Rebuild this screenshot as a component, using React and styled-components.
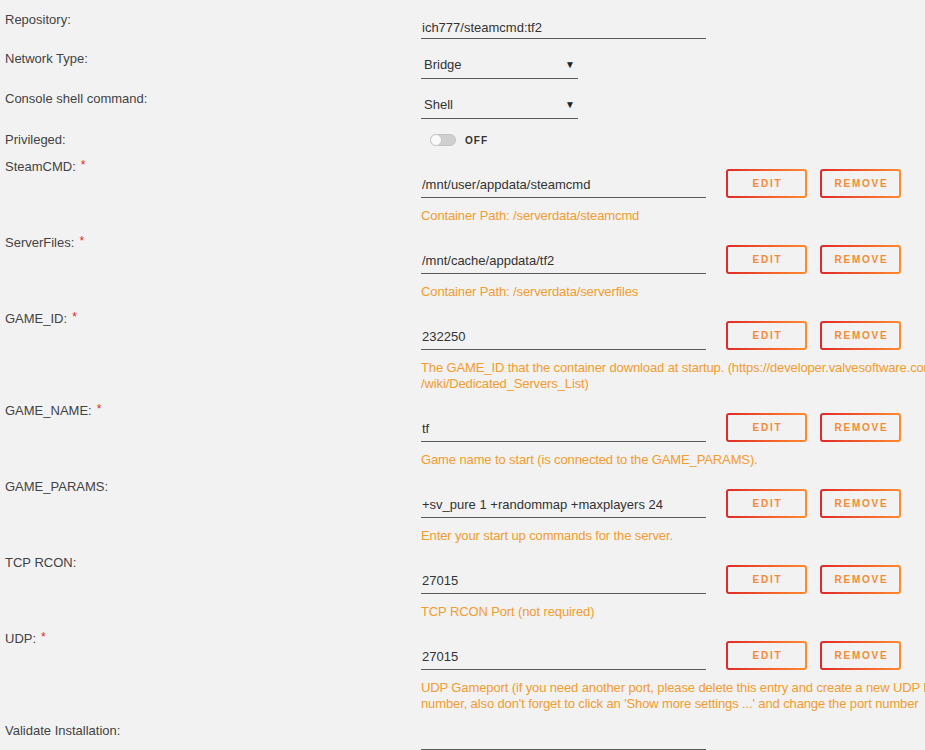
import styled, { createGlobalStyle } from 'styled-components';

const GlobalStyle = createGlobalStyle`
	html, body {
		margin: 0;
		padding: 0;
		overflow: hidden;
		background: #f2f2f2;
	}
	* {
		box-sizing: border-box;
	}
`;

const font = `'Liberation Sans', Arial, sans-serif`;
const orange = '#f29c2e';

const settings = [
	{ label: 'Repository:', kind: 'text', value: 'ich777/steamcmd:tf2' },
	{ label: 'Network Type:', kind: 'select', value: 'Bridge' },
	{ label: 'Console shell command:', kind: 'select', value: 'Shell' },
	{ label: 'Privileged:', kind: 'toggle' },
];

const configs = [
	{
		name: 'SteamCMD',
		required: true,
		value: '/mnt/user/appdata/steamcmd',
		desc: ['Container Path: /serverdata/steamcmd'],
	},
	{
		name: 'ServerFiles',
		required: true,
		value: '/mnt/cache/appdata/tf2',
		desc: ['Container Path: /serverdata/serverfiles'],
	},
	{
		name: 'GAME_ID',
		required: true,
		value: '232250',
		desc: [
			'The GAME_ID that the container download at startup. (https://developer.valvesoftware.com',
			'/wiki/Dedicated_Servers_List)',
		],
	},
	{
		name: 'GAME_NAME',
		required: true,
		value: 'tf',
		desc: ['Game name to start (is connected to the GAME_PARAMS).'],
	},
	{
		name: 'GAME_PARAMS',
		value: '+sv_pure 1 +randommap +maxplayers 24',
		desc: ['Enter your start up commands for the server.'],
	},
	{
		name: 'TCP RCON',
		value: '27015',
		desc: ['TCP RCON Port (not required)'],
	},
	{
		name: 'UDP',
		required: true,
		value: '27015',
		desc: [
			'UDP Gameport (if you need another port, please delete this entry and create a new UDP Port with the same port',
			"number, also don't forget to click an 'Show more settings ...' and change the port number",
		],
	},
];

export default function App() {
	return (
		<>
			<GlobalStyle />
			<Page>
				{settings.map((s) => (
					<Row key={s.label} $toggle={s.kind === 'toggle'}>
						<Label>{s.label}</Label>
						{s.kind === 'text' && <TextInput defaultValue={s.value} />}
						{s.kind === 'select' && (
							<SelectBox>
								<span>{s.value}</span>
								<Arrow>▼</Arrow>
							</SelectBox>
						)}
						{s.kind === 'toggle' && (
							<SwitchWrap>
								<Switch>
									<Knob />
								</Switch>
								<SwitchText>OFF</SwitchText>
							</SwitchWrap>
						)}
					</Row>
				))}

				{configs.map((c) => (
					<ConfigRow key={c.name}>
						<Label>
							{c.name}:{c.required && <Req>*</Req>}
						</Label>
						<Field>
							<FieldLine>
								<PathInput defaultValue={c.value} />
								<GradientButton>EDIT</GradientButton>
								<GradientButton>REMOVE</GradientButton>
							</FieldLine>
							<Desc>
								{c.desc.map((line) => (
									<div key={line}>{line}</div>
								))}
							</Desc>
						</Field>
					</ConfigRow>
				))}

				<Row $flush>
					<Label>Validate Installation:</Label>
					<TextInput defaultValue="" />
				</Row>
			</Page>
		</>
	);
}

const Page = styled.div`
	font-family: ${font};
	font-size: 13px;
	color: #444;
	width: 1200px;
`;

const Row = styled.div`
	display: flex;
	align-items: flex-start;
	padding: ${(p) => (p.$toggle ? '13px 0 11px' : p.$flush ? '0' : '12px 0 0')};
`;

const Label = styled.div`
	width: 421px;
	padding-left: 5px;
	line-height: 16px;
	flex-shrink: 0;
	color: #424242;
`;

const Req = styled.span`
	color: #e02626;
	font-size: 12px;
	margin-left: 5px;
	position: relative;
	top: -2px;
`;

const TextInput = styled.input`
	width: 285px;
	height: 27px;
	padding: 7px 0 3px 1px;
	border: none;
	border-bottom: 1px solid #5a5a5a;
	background: transparent;
	font-family: ${font};
	font-size: 13px;
	line-height: 16px;
	color: #333;
	outline: none;
`;

const SelectBox = styled.div`
	width: 157px;
	height: 28px;
	padding: 6px 3px 5px 3px;
	border-bottom: 1px solid #5a5a5a;
	display: flex;
	justify-content: space-between;
	align-items: center;
	line-height: 16px;
	color: #333;
`;

const Arrow = styled.span`
	font-size: 10px;
	color: #222;
`;

const SwitchWrap = styled.div`
	display: flex;
	align-items: center;
	gap: 9px;
	padding-left: 9px;
	height: 16px;
`;

const Switch = styled.div`
	position: relative;
	width: 26px;
	height: 12px;
	border-radius: 6px;
	background: #cfcfcf;
	border: 1px solid #c4c4c4;
`;

const Knob = styled.div`
	position: absolute;
	left: -1px;
	top: -1px;
	width: 12px;
	height: 12px;
	border-radius: 50%;
	background: #fafafa;
	border: 1px solid #c8c8c8;
`;

const SwitchText = styled.span`
	font-size: 10px;
	font-weight: 700;
	letter-spacing: 1px;
	color: #333;
`;

const ConfigRow = styled.div`
	display: flex;
	align-items: flex-start;
	padding-bottom: 11px;
`;

const Field = styled.div`
	display: flex;
	flex-direction: column;
	padding-top: 10px;
`;

const FieldLine = styled.div`
	display: flex;
	align-items: flex-end;
	height: 29px;
`;

const PathInput = styled(TextInput)`
	padding: 5px 0 5px 1px;
	margin-right: 20px;
`;

const GradientButton = styled.button`
	width: 81px;
	height: 29px;
	margin-right: 13px;
	border: 2px solid transparent;
	border-radius: 3px;
	background: linear-gradient(#f2f2f2, #f2f2f2) padding-box,
		linear-gradient(90deg, #e22828 0%, #ff8c2f 100%) border-box;
	font-family: ${font};
	font-size: 10px;
	font-weight: 700;
	letter-spacing: 1.8px;
	color: #f58a36;
	padding: 0 0 0 2px;
	cursor: pointer;
`;

const Desc = styled.div`
	margin-top: 10px;
	line-height: 16px;
	color: ${orange};
	letter-spacing: -0.12px;
	white-space: nowrap;
`;
